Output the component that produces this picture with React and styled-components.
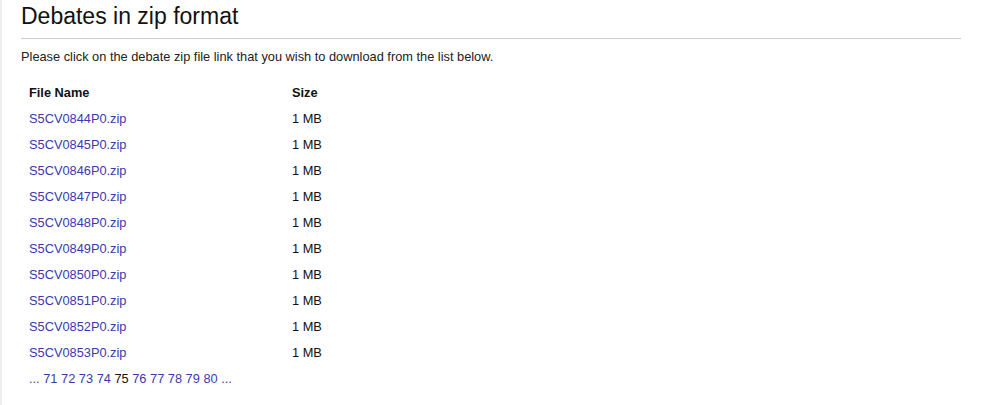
import styled, { createGlobalStyle } from 'styled-components';

const GlobalStyle = createGlobalStyle`
  body {
    margin: 0;
    background: #fff;
    font-family: "Liberation Sans", Arial, sans-serif;
    color: #000;
  }
`;

const Page = styled.main`
  min-height: 405px;
  box-sizing: border-box;
  border-left: 2px solid #eeeeee;
  padding: 2px 20px 0 19px;
`;

const Title = styled.h1`
  margin: 0;
  padding-bottom: 8px;
  font-size: 23px;
  font-weight: normal;
  line-height: 28px;
  color: #111;
  border-bottom: 1px solid #cccccc;
`;

const Intro = styled.p`
  margin: 10px 0 0;
  font-size: 12.8px;
  line-height: 15px;
  color: #222;
`;

const Files = styled.div`
  margin-top: 15px;
  display: grid;
  grid-template-columns: 263px auto;
  grid-auto-rows: 26px;
  padding-left: 8px;
  font-size: 12.8px;
  align-items: center;
`;

const Head = styled.div`
  font-weight: bold;
  color: #111;
`;

const FileLink = styled.a`
  color: #3a3aae;
  text-decoration: none;
`;

const Size = styled.div`
  color: #111;
`;

const Pager = styled.nav`
  margin-top: 1px;
  padding-left: 8px;
  font-size: 12.8px;
  line-height: 26px;
`;

const PageLink = styled.a`
  color: ${({ $current }) => ($current ? '#111' : '#3a3aae')};
  text-decoration: none;
`;

const files = [844, 845, 846, 847, 848, 849, 850, 851, 852, 853].map(
  (n) => `S5CV0${n}P0.zip`
);

const pages = ['...', '71', '72', '73', '74', '75', '76', '77', '78', '79', '80', '...'];

export default function App() {
  return (
    <>
      <GlobalStyle />
      <Page>
        <Title>Debates in zip format</Title>
        <Intro>
          Please click on the debate zip file link that you wish to download from the list below.
        </Intro>

        <Files>
          <Head>File Name</Head>
          <Head>Size</Head>
          {files.map((name) => [
            <FileLink key={name} href="#">{name}</FileLink>,
            <Size key={name + '-size'}>1 MB</Size>,
          ])}
        </Files>

        <Pager>
          {pages.map((p, i) => (
            <span key={i}>
              {i > 0 && ' '}
              <PageLink href="#" $current={p === '75'}>{p}</PageLink>
            </span>
          ))}
        </Pager>
      </Page>
    </>
  );
}
